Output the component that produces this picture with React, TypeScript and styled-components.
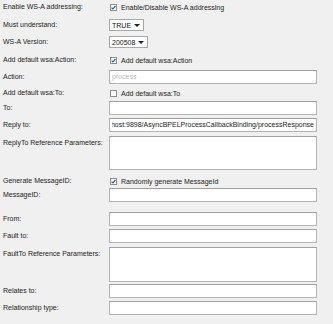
import React from "react";
import styled, { createGlobalStyle } from "styled-components";

const Global = createGlobalStyle`
  html, body { margin: 0; padding: 0; background: #f0f0f0; }
  body { font-family: "Liberation Sans", Arial, sans-serif; }
`;

const Page = styled.div`
  width: 333px;
  height: 324px;
  background: #f0f0f0;
  display: flex;
  flex-direction: column;
  font-size: 7px;
  color: #222;
  overflow: hidden;
`;

const Row = styled.div<{ $h: number; $mt: number }>`
  display: grid;
  grid-template-columns: 106px 208px;
  padding-left: 3px;
  height: ${(p) => p.$h}px;
  margin-top: ${(p) => p.$mt}px;
  flex: none;
`;

const Label = styled.div`
  height: 14px;
  line-height: 14px;
  white-space: nowrap;
  align-self: start;
`;

const CenterLabel = styled(Label)`
  align-self: center;
`;

const Control = styled.div`
  display: flex;
  align-items: center;
  min-width: 0;
`;

const TextBox = styled.div<{ $muted?: boolean }>`
  box-sizing: border-box;
  width: 208px;
  height: 100%;
  background: #fff;
  border: 1px solid #b4b4b4;
  border-top-color: #a0a0a0;
  color: ${(p) => (p.$muted ? "#b8b8b8" : "#222")};
  padding: 0 2px;
  line-height: 12px;
  white-space: nowrap;
  overflow: hidden;
  display: flex;
  align-items: flex-start;
`;

const ScrolledText = styled.div`
  display: flex;
  justify-content: flex-end;
  width: 100%;
  overflow: hidden;
  white-space: nowrap;
`;

const Check = styled.span<{ $on?: boolean }>`
  box-sizing: border-box;
  width: 7px;
  height: 7px;
  border: 1px solid #8e8f8f;
  background: #fff;
  margin-left: 1px;
  margin-right: 4px;
  display: inline-flex;
  align-items: center;
  justify-content: center;
  flex: none;
`;

const Select = styled.div<{ $w: number }>`
  box-sizing: border-box;
  width: ${(p) => p.$w}px;
  height: 12px;
  background: #fff;
  border: 1px solid #a8a8a8;
  display: flex;
  align-items: center;
  justify-content: space-between;
  padding: 0 3px 0 2px;
  color: #111;
`;

const Arrow = styled.span`
  width: 0;
  height: 0;
  border-left: 3px solid transparent;
  border-right: 3px solid transparent;
  border-top: 3px solid #222;
`;

const CheckBox = ({ on }: { on?: boolean }) => (
  <Check>
    {on && (
      <svg width="5" height="5" viewBox="0 0 5 5">
        <path d="M0.6 2.6 L2 4 L4.4 0.9" stroke="#2b4f9c" strokeWidth="1.1" fill="none" />
      </svg>
    )}
  </Check>
);

export default function App() {
  return (
    <Page>
      <Global />
      <Row $h={13} $mt={0}>
        <CenterLabel>Enable WS-A addressing:</CenterLabel>
        <Control><CheckBox on />Enable/Disable WS-A addressing</Control>
      </Row>
      <Row $h={14} $mt={5}>
        <CenterLabel>Must understand:</CenterLabel>
        <Control><Select $w={35}>TRUE<Arrow /></Select></Control>
      </Row>
      <Row $h={14} $mt={3}>
        <CenterLabel>WS-A Version:</CenterLabel>
        <Control><Select $w={39}>200508<Arrow /></Select></Control>
      </Row>
      <Row $h={14} $mt={4}>
        <CenterLabel>Add default wsa:Action:</CenterLabel>
        <Control><CheckBox on />Add default wsa:Action</Control>
      </Row>
      <Row $h={13} $mt={3}>
        <CenterLabel>Action:</CenterLabel>
        <TextBox $muted>process</TextBox>
      </Row>
      <Row $h={14} $mt={3}>
        <CenterLabel>Add default wsa:To:</CenterLabel>
        <Control><CheckBox />Add default wsa:To</Control>
      </Row>
      <Row $h={14} $mt={1}>
        <CenterLabel>To:</CenterLabel>
        <TextBox />
      </Row>
      <Row $h={14} $mt={3}>
        <CenterLabel>Reply to:</CenterLabel>
        <TextBox>
          <ScrolledText>http://localhost:9898/AsyncBPELProcessCallbackBinding/processResponse</ScrolledText>
        </TextBox>
      </Row>
      <Row $h={34} $mt={4}>
        <Label>ReplyTo Reference Parameters:</Label>
        <TextBox />
      </Row>
      <Row $h={14} $mt={4}>
        <CenterLabel>Generate MessageID:</CenterLabel>
        <Control><CheckBox on />Randomly generate MessageId</Control>
      </Row>
      <Row $h={14} $mt={0}>
        <CenterLabel>MessageID:</CenterLabel>
        <TextBox />
      </Row>
      <Row $h={14} $mt={10}>
        <CenterLabel>From:</CenterLabel>
        <TextBox />
      </Row>
      <Row $h={14} $mt={3}>
        <CenterLabel>Fault to:</CenterLabel>
        <TextBox />
      </Row>
      <Row $h={35} $mt={4}>
        <Label>FaultTo Reference Parameters:</Label>
        <TextBox />
      </Row>
      <Row $h={14} $mt={2}>
        <CenterLabel>Relates to:</CenterLabel>
        <TextBox />
      </Row>
      <Row $h={14} $mt={3}>
        <CenterLabel>Relationship type:</CenterLabel>
        <TextBox />
      </Row>
    </Page>
  );
}
